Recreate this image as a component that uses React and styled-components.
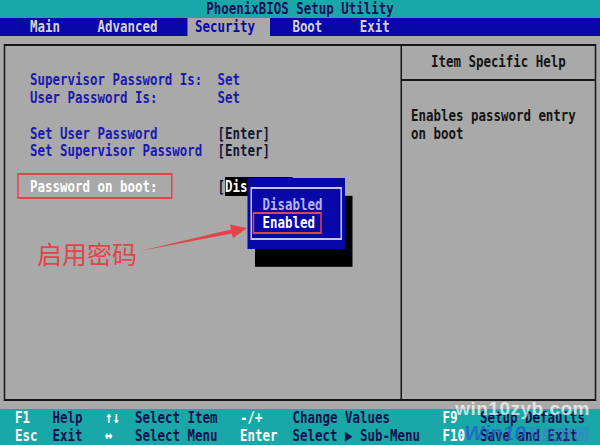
import React from "react";
import styled, { createGlobalStyle } from "styled-components";

// text-mode grid: 80 cols x 25 rows. Laid out at 10px per column, then squeezed to 600px
const ROW = 17.8;
const TEAL = "#1aa7a8";
const BLUE = "#0808a8";
const GRAY = "#a9a9a9";
const RED = "#e5434a";

const GlobalStyle = createGlobalStyle`
  html, body {
    margin: 0;
    padding: 0;
    background: ${GRAY};
  }
  body {
    width: 600px;
    height: 445px;
    overflow: hidden;
  }
`;

const Page = styled.div`
  position: relative;
  width: 600px;
  height: 445px;
  overflow: hidden;
  background: ${GRAY};
`;

const Screen = styled.div`
  position: relative;
  width: 800px;
  height: 445px;
  display: flex;
  flex-direction: column;
  transform: scaleX(0.75);
  transform-origin: 0 0;
  font-family: "DejaVu Sans Mono", "Liberation Mono", monospace;
  font-size: 16.6px;
  font-weight: bold;
  line-height: ${ROW}px;
  white-space: pre;
`;

const TitleBar = styled.div`
  height: ${ROW}px;
  background: ${TEAL};
  color: #12125a;
  text-align: center;
`;

const MenuBar = styled.div`
  height: ${ROW}px;
  display: flex;
  gap: 50px;
  padding-left: 40px;
  background: ${BLUE};
`;

const Tab = styled.span`
  color: ${(p) => (p.$active ? BLUE : "#d4d4d4")};
  background: ${(p) => (p.$active ? GRAY : "transparent")};
  box-shadow: ${(p) =>
    p.$active ? `-10px 0 0 ${GRAY}, 20px 0 0 ${GRAY}` : "none"};
`;

const Main = styled.div`
  flex: 1;
  padding: 8.9px 5px;
  background: ${GRAY};
`;

const Frame = styled.div`
  height: 100%;
  box-sizing: border-box;
  border: 2px solid #161616;
  display: grid;
  grid-template-columns: 527px 1fr;
`;

const LeftPane = styled.div`
  padding: 24.7px 0 0 33px;
`;

const SettingRow = styled.div`
  display: grid;
  grid-template-columns: 250px auto;
  height: ${ROW}px;
  margin-top: ${(p) => (p.$gap ? `${ROW}px` : "0")};
  color: #1a1ab0;
`;

const Value = styled.span`
  color: ${(p) => (p.$dark ? "#151535" : "#1a1ab0")};
`;

const Selected = styled.span`
  position: relative;
  color: #ffffff;

  &::after {
    content: "";
    position: absolute;
    top: -4px;
    bottom: -3px;
    left: -17px;
    right: -20px;
    border: 2px solid ${RED};
  }
`;

const Current = styled.span`
  color: #ffffff;
  background: #000000;
`;

const RightPane = styled.div`
  border-left: 2px solid #161616;
  color: #141414;
`;

const HelpHeader = styled.div`
  padding: 6.9px 0 7.9px;
  height: ${ROW}px;
  text-align: center;
  border-bottom: 2px solid #161616;
`;

const HelpBody = styled.div`
  padding: 25.7px 0 0 12px;
`;

const Footer = styled.div`
  height: ${ROW * 2}px;
  display: grid;
  grid-template-columns: 50px 70px 40px 140px 70px 200px 50px auto;
  grid-auto-rows: ${ROW}px;
  padding-left: 20px;
  background: ${TEAL};
`;

const Key = styled.span`
  color: #ffffff;
`;

const Desc = styled.span`
  color: #12124e;
`;

const Popup = styled.div`
  position: absolute;
  left: 330px;
  top: ${ROW * 10}px;
  width: 130px;
  height: ${ROW * 4}px;
  box-sizing: border-box;
  padding: ${ROW}px 0 0 20px;
  background: ${BLUE};
  box-shadow: 10px ${ROW}px 0 #000000;

  &::before {
    content: "";
    position: absolute;
    inset: 8.9px 4px;
    border: 2px solid #c4c4ee;
  }
`;

const Option = styled.div`
  height: ${ROW}px;
  color: ${(p) => (p.$on ? "#ffffff" : "#b4b4f4")};

  span {
    position: relative;
  }

  span::after {
    content: "";
    display: ${(p) => (p.$on ? "block" : "none")};
    position: absolute;
    top: -1px;
    bottom: -2px;
    left: -13px;
    right: -9px;
    border: 2px solid ${RED};
  }
`;

const Note = styled.div`
  position: absolute;
  left: 37px;
  top: 238px;
  font-family: "Noto Sans CJK SC", sans-serif;
  font-size: 25px;
  line-height: 30px;
  color: ${RED};
`;

const Arrow = styled.svg`
  position: absolute;
  left: 0;
  top: 0;
  pointer-events: none;
`;

const Watermark = styled.div`
  position: absolute;
  right: 10px;
  bottom: 0;
  display: flex;
  flex-direction: column;
  align-items: flex-end;
  gap: 4px;
  font-family: "Liberation Sans", Arial, sans-serif;
  font-weight: bold;
  pointer-events: none;
`;

const Site = styled.span`
  font-size: 19px;
  line-height: 20px;
  color: rgba(255, 255, 255, 0.7);
  letter-spacing: 0.5px;
`;

const Brand = styled.span`
  font-size: 16px;
  line-height: 20px;
  color: rgba(70, 110, 220, 0.45);

  b {
    font-size: 21px;
    font-style: italic;
    color: rgba(40, 80, 210, 0.7);
  }
`;

const footer = [
  ["F1", "Help", "↑↓", "Select Item", "-/+", "Change Values", "F9", "Setup Defaults"],
  ["Esc", "Exit", "↔", "Select Menu", "Enter", "Select ▶ Sub-Menu", "F10", "Save and Exit"],
];

export default function App() {
  return (
    <Page>
      <GlobalStyle />
      <Screen>
        <TitleBar>PhoenixBIOS Setup Utility</TitleBar>
        <MenuBar>
          <Tab>Main</Tab>
          <Tab>Advanced</Tab>
          <Tab $active>Security</Tab>
          <Tab>Boot</Tab>
          <Tab>Exit</Tab>
        </MenuBar>

        <Main>
          <Frame>
            <LeftPane>
              <SettingRow>
                <span>Supervisor Password Is:</span>
                <Value>Set</Value>
              </SettingRow>
              <SettingRow>
                <span>User Password Is:</span>
                <Value>Set</Value>
              </SettingRow>
              <SettingRow $gap>
                <span>Set User Password</span>
                <Value $dark>[Enter]</Value>
              </SettingRow>
              <SettingRow>
                <span>Set Supervisor Password</span>
                <Value $dark>[Enter]</Value>
              </SettingRow>
              <SettingRow $gap>
                <span>
                  <Selected>Password on boot:</Selected>
                </span>
                <Value $dark>
                  [<Current>Disabled]</Current>
                </Value>
              </SettingRow>
            </LeftPane>
            <RightPane>
              <HelpHeader>Item Specific Help</HelpHeader>
              <HelpBody>
                <div>Enables password entry</div>
                <div>on boot</div>
              </HelpBody>
            </RightPane>
          </Frame>
        </Main>

        <Footer>
          {footer.map((row) =>
            row.map((t, i) =>
              i % 2 === 0 ? <Key key={t}>{t}</Key> : <Desc key={t}>{t}</Desc>
            )
          )}
        </Footer>

        <Popup>
          <Option>Disabled</Option>
          <Option $on>
            <span>Enabled</span>
          </Option>
        </Popup>
      </Screen>

      <Note>启用密码</Note>
      <Arrow width="600" height="445" viewBox="0 0 600 445">
        <polygon
          points="140,251 231,229.4 229.9,224.6 247,228 232.9,238.2 231.8,233.4"
          fill={RED}
        />
      </Arrow>

      <Watermark>
        <Site>win10zyb.com</Site>
        <Brand>
          <b>Win10</b>系统家园
        </Brand>
      </Watermark>
    </Page>
  );
}
